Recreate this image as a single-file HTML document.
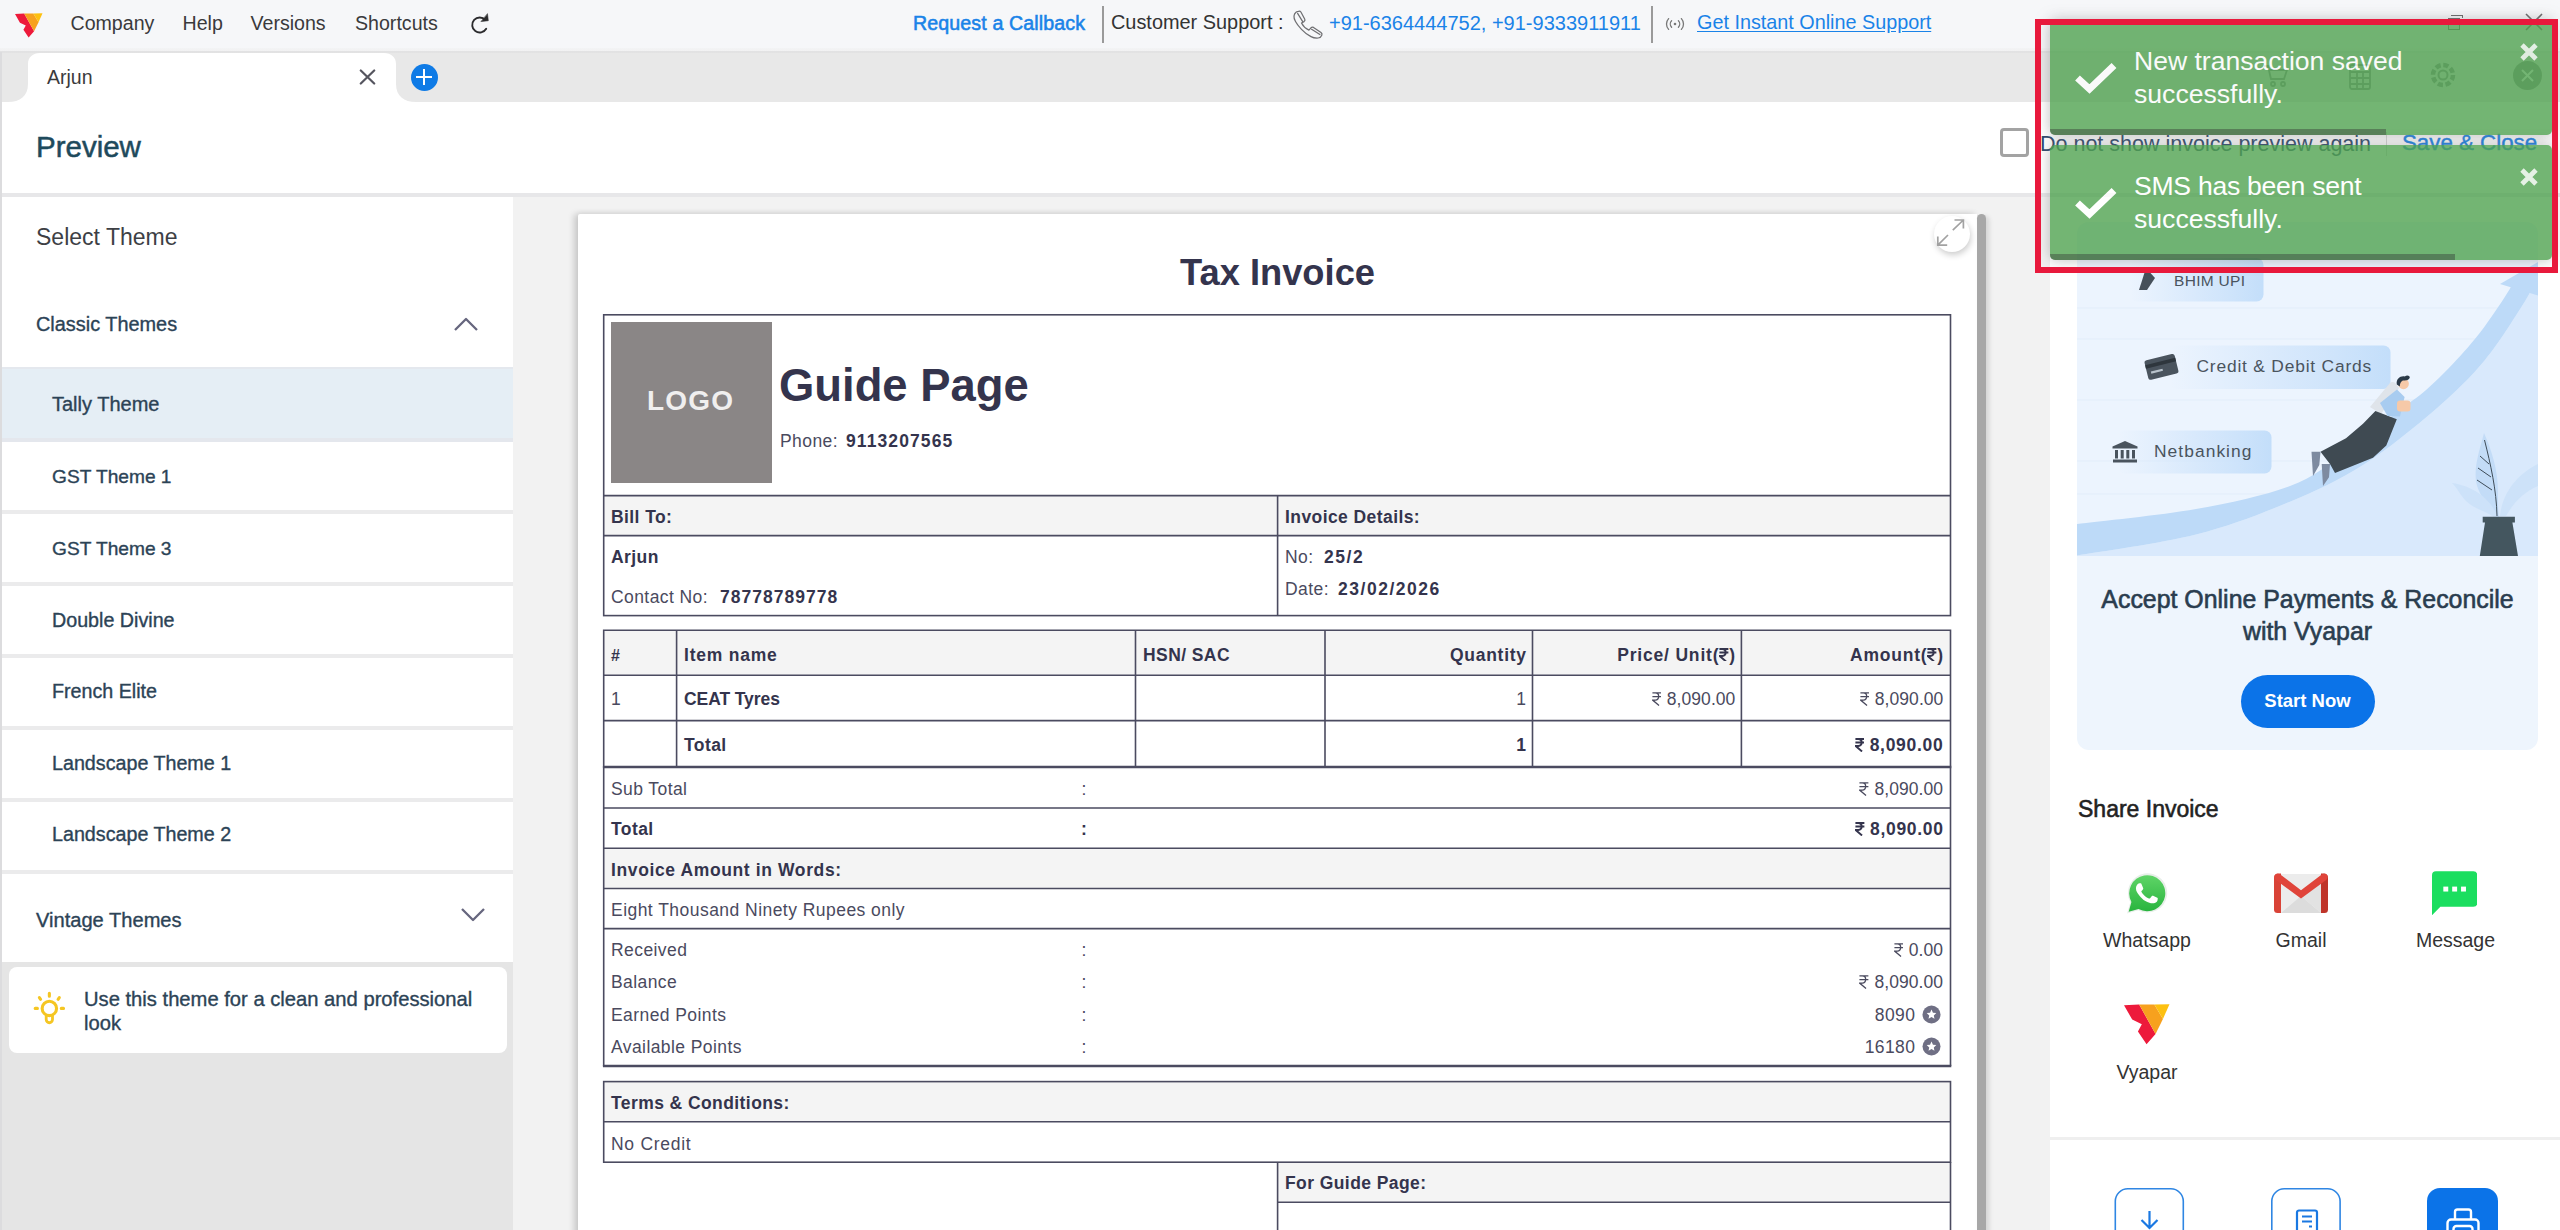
<!DOCTYPE html>
<html>
<head>
<meta charset="utf-8">
<title>Preview</title>
<style>
*{box-sizing:border-box;margin:0;padding:0}
html,body{width:2560px;height:1230px;overflow:hidden;background:#f2f2f2;font-family:"Liberation Sans",sans-serif;}
.abs{position:absolute}
.t{position:absolute;white-space:nowrap;line-height:1}
#stage{position:relative;width:2560px;height:1230px;overflow:hidden;background:#f2f2f2}

/* top bar */
#topbar{left:0;top:0;width:2560px;height:51px;background:#f6f7f9}
#topshadow{left:0;top:48px;width:2560px;height:5px;background:linear-gradient(#f3f4f5 0,#f1f1f2 56%,#e2e2e3 64%,#e3e3e3 100%)}
.menu{font-size:19.6px;color:#3a3a3c;top:14px}
.blue{color:#1a83e8}
/* tab bar */
#tabbar{left:0;top:53px;width:2560px;height:49.4px;background:#e8e8e8}
#leftedge{left:0;top:52px;width:2px;height:1178px;background:#dcdcde}
/* header */
#header{left:2px;top:102px;width:2558px;height:91px;background:#fff}
#hline{left:2px;top:193px;width:2558px;height:4px;background:#e7e7e9}
/* left panel */
#lp{left:2px;top:197px;width:511px;height:765px;background:#fff}
#lpbot{left:2px;top:962px;width:511px;height:268px;background:#e5e5e5}
.sep{left:2px;width:511px;height:4px;background:#ebebec}
.li{font-size:19.5px;color:#2c4356;left:52px}
/* invoice */
#paper{left:578px;top:214px;width:1399px;height:1030px;background:#fff;box-shadow:-4px 0 6px rgba(0,0,0,.17),0 -3px 5px rgba(0,0,0,.025);border-radius:2px 0 0 0}
.bx{position:absolute;border:1.5px solid #454558}
.ln{position:absolute;background:#454558}
.iv{color:#4a4a5e}
.iv.b{color:#34344d}
.b{font-weight:bold}
.hd{background:#f4f4f4}
/* right panel */
#rp{left:2050px;top:197px;width:510px;height:1033px;background:#fff}
.sl{font-size:19.5px;color:#333;transform:translateX(-50%)}
.toast{background:#51a351;opacity:.8;border-radius:5px;overflow:hidden;box-shadow:0 0 14px rgba(120,120,120,.6)}
</style>
</head>
<body>
<div id="stage">

<!-- ============ TOP BAR ============ -->
<div class="abs" id="topbar"></div>
<div class="abs" id="topshadow"></div>
<svg class="abs" style="left:15px;top:12.5px" width="27.5" height="25" viewBox="218 760 222 196"><polygon fill="#ed1a3b" points="218,765 292,762 372,905 328,955 286,893 305,858 258,835"/><polygon fill="#f7a11e" points="292,762 366,762 408,832 372,905"/><polygon fill="#fdc010" points="366,762 440,760 408,832"/></svg>
<div class="t menu" style="left:70.5px">Company</div>
<div class="t menu" style="left:182.5px">Help</div>
<div class="t menu" style="left:250.5px">Versions</div>
<div class="t menu" style="left:355px">Shortcuts</div>
<svg class="abs" style="left:468px;top:11px" width="24" height="26" viewBox="468 11 24 26" fill="none" stroke="#2b2b2d" stroke-width="1.9" stroke-linecap="round"><path d="M486.2 28.8A7.5 7.5 0 1 1 485.3 20"/><path d="M487.5 14L488.3 20.7L481.3 21.5z" fill="#2b2b2d" stroke-width=".6" stroke-linejoin="round"/></svg>
<div class="t blue" id="rcb" style="left:913px;top:13.5px;font-size:19.6px;-webkit-text-stroke:0.55px #1a83e8;letter-spacing:.12px">Request a Callback</div>
<div class="abs" style="left:1102px;top:6px;width:2px;height:37px;background:#9a9a9a"></div>
<div class="t" id="cs" style="left:1111px;top:13px;font-size:19.9px;color:#333">Customer Support :</div>
<svg class="abs" style="left:1292px;top:9px" width="32" height="31" viewBox="1292 9 32 31" fill="none" stroke="#6f6f72" stroke-width="1.25" stroke-linejoin="round" stroke-linecap="round"><path d="M1298.4 11.3C1299.5 11 1300.3 11.2 1300.9 12L1304.8 19.3C1305.2 20.3 1304.8 21 1304 21.6L1301.5 23C1303 26 1305.5 28.5 1308.9 30.1L1311 27.8C1311.8 27 1312.6 26.9 1313.5 27.4L1321 32.5C1322 33.3 1322.2 34.3 1321.8 35.2C1321 37 1319.8 37.9 1318.2 38C1315.5 38.2 1313 37.7 1311 36.6C1307 34.5 1304 32 1301.5 29.3C1298.8 26.5 1296.8 24 1295.5 21.5C1294.3 19.5 1293.8 17.8 1294 16C1294.2 14.3 1295 13 1296 12.2C1296.8 11.7 1297.6 11.4 1298.4 11.3Z"/><path d="M1297.6 13.4L1302.7 21.7M1311.6 29.3L1319.9 34.5"/></svg>
<div class="t blue" id="ph" style="left:1329px;top:13px;font-size:20px">+91-6364444752, +91-9333911911</div>
<div class="abs" style="left:1650.5px;top:6px;width:2px;height:37px;background:#9a9a9a"></div>
<svg class="abs" style="left:1664px;top:15px" width="22" height="18" viewBox="0 0 22 18" fill="none" stroke="#777" stroke-width="1.3" stroke-linecap="round"><circle cx="11" cy="9" r="1.3" fill="#777" stroke="none"/><path d="M7.6 5.8a4.6 4.6 0 0 0 0 6.4M14.4 5.8a4.6 4.6 0 0 1 0 6.4M4.6 3.6a8 8 0 0 0 0 10.8M17.4 3.6a8 8 0 0 1 0 10.8"/></svg>
<div class="t blue" id="gis" style="left:1697px;top:13px;font-size:19.8px;text-decoration:underline;text-underline-offset:2px">Get Instant Online Support</div>
<!-- window controls -->
<div class="abs" style="left:2448px;top:18px;width:12px;height:12px;border:1.5px solid #6a6a6a"></div>
<div class="abs" style="left:2451px;top:15px;width:12px;height:3px;border-top:1.5px solid #6a6a6a;border-right:1.5px solid #6a6a6a"></div>
<svg class="abs" style="left:2524px;top:12px" width="20" height="20" viewBox="0 0 20 20" stroke="#6a6a6a" stroke-width="1.6"><path d="M2 2L18 18M18 2L2 18"/></svg>


<!-- ============ TAB BAR ============ -->
<div class="abs" id="tabbar"></div>
<svg class="abs" style="left:8px;top:52px" width="410" height="50" viewBox="0 0 410 50"><path fill="#fff" d="M0 50 C12 50 20 44 20 32 L20 12 C20 5 25 1 32 1 L376 1 C383 1 388 5 388 12 L388 32 C388 44 396 50 408 50 Z"/></svg>
<div class="t" id="tabname" style="left:47px;top:67.7px;font-size:19.5px;color:#3a3a3c">Arjun</div>
<svg class="abs" style="left:359px;top:69px" width="17" height="16" viewBox="0 0 17 16" stroke="#55555f" stroke-width="2.2" stroke-linecap="round"><path d="M1.8 1.5L15.2 14.5M15.2 1.5L1.8 14.5"/></svg>
<div class="abs" style="left:410.5px;top:63.5px;width:27px;height:27px;border-radius:50%;background:#0f7be6"></div>
<div class="abs" style="left:416px;top:75.6px;width:16px;height:2.8px;background:#fff"></div>
<div class="abs" style="left:422.6px;top:69px;width:2.8px;height:16px;background:#fff"></div>
<!-- right icons (faint, under toast) -->
<svg class="abs" style="left:2262px;top:62px" width="28" height="28" viewBox="0 0 28 28" fill="none" stroke="#8a8a90" stroke-width="1.8"><path d="M2 4h4l3 13h13l3-9H8"/><circle cx="11" cy="22" r="2"/><circle cx="21" cy="22" r="2"/></svg>
<svg class="abs" style="left:2349px;top:64px" width="22" height="26" viewBox="0 0 22 26" fill="none" stroke="#8a8a90" stroke-width="1.8"><rect x="1" y="1" width="20" height="24" rx="2"/><path d="M1 8h20M8 8v17M14 8v17M1 14h20M1 20h20"/></svg>
<svg class="abs" style="left:2429px;top:61px" width="28" height="28" viewBox="0 0 28 28" fill="none" stroke="#8a8a90" stroke-width="2"><circle cx="14" cy="14" r="4.5"/><circle cx="14" cy="14" r="10" stroke-dasharray="5.2 2.65" stroke-width="4.5"/></svg>
<div class="abs" style="left:2513px;top:61px;width:29px;height:29px;border-radius:50%;background:#8c8c8e"></div>
<svg class="abs" style="left:2520px;top:68px" width="15" height="15" viewBox="0 0 15 15" stroke="#fff" stroke-width="2"><path d="M2 2L13 13M13 2L2 13"/></svg>


<!-- ============ HEADER ============ -->
<div class="abs" id="header"></div>
<div class="abs" id="hline"></div>
<div class="t" id="pv" style="left:36px;top:132px;font-size:29.5px;color:#1e4a5c;-webkit-text-stroke:0.5px #1e4a5c">Preview</div>
<div class="abs" style="left:2000px;top:128px;width:29px;height:29px;border:3px solid #a3a3a3;border-radius:4px;background:#fff"></div>
<div class="t" id="dns" style="left:2040px;top:133.5px;font-size:21.5px;color:#2f4a6d">Do not show invoice preview again</div>
<div class="abs" style="left:2386px;top:132px;width:1px;height:24px;background:#d8d8d8"></div>
<div class="t" id="svc" style="left:2402px;top:131.5px;font-size:22.3px;color:#1a83e8;-webkit-text-stroke:0.4px #1a83e8">Save &amp; Close</div>


<!-- ============ LEFT PANEL ============ -->
<div class="abs" id="lp"></div>
<div class="abs" id="lpbot"></div>
<div class="t" id="selth" style="left:36px;top:226px;font-size:23px;color:#3d3f45">Select Theme</div>
<div class="t" id="clth" style="left:36px;top:315px;font-size:19.9px;color:#2c4356;-webkit-text-stroke:0.35px #2c4356">Classic Themes</div>
<svg class="abs" style="left:452.3px;top:315.2px" width="28" height="18" viewBox="0 0 28 18" fill="none" stroke="#66667e" stroke-width="2.3" stroke-linecap="butt" stroke-linejoin="round"><path d="M3 15L14 4L25 15"/></svg>
<div class="abs" style="left:2px;top:366.5px;width:511px;height:75.5px;background:#e5eef5;border-top:2.5px solid #e4e8ee;border-bottom:4px solid #e4e7ed"></div>
<div class="t li" id="tally" style="top:394px;-webkit-text-stroke:0.35px #2c4356;font-size:20px">Tally Theme</div>
<div class="t li" id="li0" style="top:467px;-webkit-text-stroke:0.35px #2c4356;font-size:19.15px">GST Theme 1</div>
<div class="abs sep" style="top:510px"></div>
<div class="t li" id="li1" style="top:539px;-webkit-text-stroke:0.35px #2c4356;font-size:19.15px">GST Theme 3</div>
<div class="abs sep" style="top:582px"></div>
<div class="t li" id="li2" style="top:611px;-webkit-text-stroke:0.35px #2c4356;font-size:19.7px">Double Divine</div>
<div class="abs sep" style="top:654px"></div>
<div class="t li" id="li3" style="top:682px;-webkit-text-stroke:0.35px #2c4356;font-size:19.7px">French Elite</div>
<div class="abs sep" style="top:726px"></div>
<div class="t li" id="li4" style="top:754px;-webkit-text-stroke:0.35px #2c4356;font-size:19.7px">Landscape Theme 1</div>
<div class="abs sep" style="top:798px"></div>
<div class="t li" id="li5" style="top:825px;-webkit-text-stroke:0.35px #2c4356;font-size:19.7px">Landscape Theme 2</div>
<div class="abs sep" style="top:870px"></div>
<div class="t" id="vint" style="left:36px;top:910px;font-size:20.1px;color:#2c4356;-webkit-text-stroke:0.35px #2c4356">Vintage Themes</div>
<svg class="abs" style="left:459px;top:905px" width="28" height="18" viewBox="0 0 28 18" fill="none" stroke="#66667e" stroke-width="2.3" stroke-linecap="butt" stroke-linejoin="round"><path d="M3 4L14 15L25 4"/></svg>
<div class="abs" style="left:9px;top:967px;width:498px;height:86px;background:#fff;border-radius:8px"></div>
<svg class="abs" style="left:30px;top:988px" width="40" height="40" viewBox="30 988 40 40" fill="none" stroke="#f5c623" stroke-width="3.1" stroke-linecap="round"><circle cx="49.35" cy="1008.4" r="7.2"/><path d="M46.2 1015.5V1019.6A3.15 3.15 0 0 0 52.5 1019.6V1015.5" stroke-width="2.8"/><path d="M49.35 993.3V996.3M39.4 997.6L40.6 999.3M59.3 997.6L58.1 999.3M35.2 1008.4H37.4M61.3 1008.4H63.5"/></svg>
<div class="t" id="tip1" style="left:84px;top:988.5px;font-size:20.2px;color:#2c4356;-webkit-text-stroke:0.35px #2c4356">Use this theme for a clean and professional</div>
<div class="t" id="tip2" style="left:84px;top:1012.5px;font-size:20.2px;color:#2c4356;-webkit-text-stroke:0.35px #2c4356">look</div>


<!-- ============ INVOICE ============ -->
<div class="abs" id="paper"></div>
<svg class="abs" style="left:0;top:0" width="2560" height="1230" viewBox="0 0 2560 1230" fill="none" stroke="#4b4b60" stroke-width="1.6">
<rect x="604" y="496" width="1346.5" height="40" fill="#f4f4f4" stroke="none"/>
<rect x="604" y="630.5" width="1346.5" height="45" fill="#f4f4f4" stroke="none"/>
<rect x="604" y="848.5" width="1346.5" height="40" fill="#f4f4f4" stroke="none"/>
<rect x="604" y="1082" width="1346.5" height="40" fill="#f4f4f4" stroke="none"/>
<rect x="1278" y="1162.5" width="672.5" height="40" fill="#f4f4f4" stroke="none"/>
<rect x="603.7" y="314.8" width="1346.8" height="300.8"/>
<path d="M603.7 495.6H1950.5M603.7 535.6H1950.5M1277.6 495.6V615.6"/>
<path d="M603.7 1066V630.3H1950.5V1066"/>
<path d="M603.7 675.2H1950.5M603.7 720.6H1950.5M676.6 630.3V767M1135.5 630.3V767M1325 630.3V767M1532.5 630.3V767M1741.4 630.3V767"/>
<path d="M603.7 808H1950.5M603.7 848.2H1950.5M603.7 888.5H1950.5M603.7 928.6H1950.5"/>
<path d="M602.9 767H1951.3M602.9 1066H1951.3" stroke-width="2.6"/>
<rect x="603.7" y="1081.6" width="1346.8" height="80.6"/>
<path d="M603.7 1121.8H1950.5"/>
<path d="M1277.6 1162V1240M1950.5 1162V1240M1277.6 1202.2H1950.5"/>
</svg>
<div class="abs" style="left:611px;top:322px;width:161px;height:161px;background:#8a8686"></div>
<div class="t b" id="logo" style="left:647px;top:387px;font-size:28px;color:#f0efef;letter-spacing:1.2px">LOGO</div>
<div class="t iv b" id="taxinv" style="top:254.70px;font-size:36.3px;left:1277.50px;transform:translateX(-50%);">Tax Invoice</div>
<div class="t iv b" id="gp" style="top:362.6px;font-size:45.4px;left:779.00px;">Guide Page</div>
<div class="t iv" id="phl" style="top:432.98px;font-size:17.50px;left:780.00px;letter-spacing:0.42px">Phone:</div>
<div class="t iv b" id="phn" style="top:432.98px;font-size:17.50px;left:846.00px;letter-spacing:1.10px">9113207565</div>
<div class="t iv b" id="billto" style="top:509.18px;font-size:17.50px;left:611.00px;letter-spacing:0.42px">Bill To:</div>
<div class="t iv b" id="invd" style="top:509.18px;font-size:17.50px;left:1285.00px;letter-spacing:0.42px">Invoice Details:</div>
<div class="t iv b" id="arj" style="top:549.18px;font-size:17.50px;left:611.00px;letter-spacing:0.42px">Arjun</div>
<div class="t iv" id="cnl" style="top:588.58px;font-size:17.50px;left:611.00px;letter-spacing:0.42px">Contact No:</div>
<div class="t iv b" id="cnn" style="top:588.58px;font-size:17.50px;left:720.00px;letter-spacing:1.02px">78778789778</div>
<div class="t iv" id="nol" style="top:549.18px;font-size:17.50px;left:1285.00px;letter-spacing:0.42px">No:</div>
<div class="t iv b" id="nov" style="top:549.18px;font-size:17.50px;left:1324.00px;letter-spacing:1.57px">25/2</div>
<div class="t iv" id="dtl" style="top:581.38px;font-size:17.50px;left:1285.00px;letter-spacing:0.42px">Date:</div>
<div class="t iv b" id="dtv" style="top:581.38px;font-size:17.50px;left:1338.00px;letter-spacing:1.52px">23/02/2026</div>
<div class="t iv b" style="top:648.06px;font-size:16.00px;left:611.00px;">#</div>
<div class="t iv b" id="ith" style="top:646.78px;font-size:17.50px;left:684.00px;letter-spacing:0.77px">Item name</div>
<div class="t iv b" id="hsn" style="top:646.78px;font-size:17.50px;left:1143.00px;letter-spacing:0.42px">HSN/ SAC</div>
<div class="t iv b" id="qty" style="top:646.78px;font-size:17.50px;right:1033.28px;letter-spacing:0.72px">Quantity</div>
<div class="t iv b" id="pru" style="top:646.78px;font-size:17.50px;right:824.18px;letter-spacing:0.82px">Price/ Unit(<svg viewBox="0 0 10 14" style="width:.56em;height:.78em;vertical-align:-.04em" fill="none" stroke="currentColor" stroke-width="2"><path d="M.4 1H9.6M.4 4.7H9.6M.4 1H3.4C8 1 8 8.3 3.4 8.3H.6L7.2 13.8"/></svg>)</div>
<div class="t iv b" id="amt" style="top:646.78px;font-size:17.50px;right:616.23px;letter-spacing:0.77px">Amount(<svg viewBox="0 0 10 14" style="width:.56em;height:.78em;vertical-align:-.04em" fill="none" stroke="currentColor" stroke-width="2"><path d="M.4 1H9.6M.4 4.7H9.6M.4 1H3.4C8 1 8 8.3 3.4 8.3H.6L7.2 13.8"/></svg>)</div>
<div class="t iv" style="top:690.98px;font-size:17.50px;left:611.00px;letter-spacing:0.42px">1</div>
<div class="t iv b" id="ceat" style="top:690.98px;font-size:17.50px;left:684.00px;letter-spacing:-0.08px">CEAT Tyres</div>
<div class="t iv" style="top:690.98px;font-size:17.50px;right:1033.58px;letter-spacing:0.42px">1</div>
<div class="t iv" id="p1" style="top:690.98px;font-size:17.50px;right:824.58px;letter-spacing:.07px"><svg class="rs" viewBox="0 0 10 14" style="width:.56em;height:.78em;vertical-align:-.04em;margin-right:.3em" fill="none" stroke="currentColor" stroke-width="1.3"><path d="M.4 1H9.6M.4 4.7H9.6M.4 1H3.4C8 1 8 8.3 3.4 8.3H.6L7.2 13.8"/></svg>8,090.00</div>
<div class="t iv" id="a1" style="top:690.98px;font-size:17.50px;right:616.58px;letter-spacing:.07px"><svg class="rs" viewBox="0 0 10 14" style="width:.56em;height:.78em;vertical-align:-.04em;margin-right:.3em" fill="none" stroke="currentColor" stroke-width="1.3"><path d="M.4 1H9.6M.4 4.7H9.6M.4 1H3.4C8 1 8 8.3 3.4 8.3H.6L7.2 13.8"/></svg>8,090.00</div>
<div class="t iv b" style="top:737.18px;font-size:17.50px;left:684.00px;letter-spacing:0.42px">Total</div>
<div class="t iv b" style="top:737.18px;font-size:17.50px;right:1033.58px;letter-spacing:0.42px">1</div>
<div class="t iv b" id="a2" style="top:737.18px;font-size:17.50px;right:616.58px;letter-spacing:.7px"><svg class="rs" viewBox="0 0 10 14" style="width:.56em;height:.78em;vertical-align:-.04em;margin-right:.3em" fill="none" stroke="currentColor" stroke-width="2"><path d="M.4 1H9.6M.4 4.7H9.6M.4 1H3.4C8 1 8 8.3 3.4 8.3H.6L7.2 13.8"/></svg>8,090.00</div>
<div class="t iv" id="subt" style="top:781.18px;font-size:17.50px;left:611.00px;letter-spacing:0.42px">Sub Total</div>
<div class="t iv" style="top:781.18px;font-size:17.50px;left:1081.50px;letter-spacing:0.42px">:</div>
<div class="t iv" style="top:781.18px;font-size:17.50px;right:616.93px;letter-spacing:0.07px"><svg class="rs" viewBox="0 0 10 14" style="width:.56em;height:.78em;vertical-align:-.04em;margin-right:.3em" fill="none" stroke="currentColor" stroke-width="1.3"><path d="M.4 1H9.6M.4 4.7H9.6M.4 1H3.4C8 1 8 8.3 3.4 8.3H.6L7.2 13.8"/></svg>8,090.00</div>
<div class="t iv b" style="top:821.18px;font-size:17.50px;left:611.00px;letter-spacing:0.42px">Total</div>
<div class="t iv b" style="top:821.18px;font-size:17.50px;left:1081.00px;letter-spacing:0.42px">:</div>
<div class="t iv b" style="top:821.18px;font-size:17.50px;right:616.30px;letter-spacing:0.70px"><svg class="rs" viewBox="0 0 10 14" style="width:.56em;height:.78em;vertical-align:-.04em;margin-right:.3em" fill="none" stroke="currentColor" stroke-width="2"><path d="M.4 1H9.6M.4 4.7H9.6M.4 1H3.4C8 1 8 8.3 3.4 8.3H.6L7.2 13.8"/></svg>8,090.00</div>
<div class="t iv b" id="iaw" style="top:861.58px;font-size:17.50px;left:611.00px;letter-spacing:0.62px">Invoice Amount in Words:</div>
<div class="t iv" id="eight" style="top:901.78px;font-size:17.50px;left:611.00px;letter-spacing:0.46px">Eight Thousand Ninety Rupees only</div>
<div class="t iv" id="recv" style="top:941.88px;font-size:17.50px;left:611.00px;letter-spacing:0.42px">Received</div>
<div class="t iv" style="top:941.88px;font-size:17.50px;left:1081.50px;letter-spacing:0.42px">:</div>
<div class="t iv" style="top:941.88px;font-size:17.50px;right:616.93px;letter-spacing:0.07px"><svg class="rs" viewBox="0 0 10 14" style="width:.56em;height:.78em;vertical-align:-.04em;margin-right:.3em" fill="none" stroke="currentColor" stroke-width="1.3"><path d="M.4 1H9.6M.4 4.7H9.6M.4 1H3.4C8 1 8 8.3 3.4 8.3H.6L7.2 13.8"/></svg>0.00</div>
<div class="t iv" style="top:974.18px;font-size:17.50px;left:611.00px;letter-spacing:0.42px">Balance</div>
<div class="t iv" style="top:974.18px;font-size:17.50px;left:1081.50px;letter-spacing:0.42px">:</div>
<div class="t iv" style="top:974.18px;font-size:17.50px;right:616.93px;letter-spacing:0.07px"><svg class="rs" viewBox="0 0 10 14" style="width:.56em;height:.78em;vertical-align:-.04em;margin-right:.3em" fill="none" stroke="currentColor" stroke-width="1.3"><path d="M.4 1H9.6M.4 4.7H9.6M.4 1H3.4C8 1 8 8.3 3.4 8.3H.6L7.2 13.8"/></svg>8,090.00</div>
<div class="t iv" id="earn" style="top:1006.88px;font-size:17.50px;left:611.00px;letter-spacing:0.42px">Earned Points</div>
<div class="t iv" style="top:1006.88px;font-size:17.50px;left:1081.50px;letter-spacing:0.42px">:</div>
<div class="t iv" style="top:1006.88px;font-size:17.50px;right:644.58px;letter-spacing:0.42px">8090</div>
<div class="t iv" id="avail" style="top:1038.68px;font-size:17.50px;left:611.00px;letter-spacing:0.42px">Available Points</div>
<div class="t iv" style="top:1038.68px;font-size:17.50px;left:1081.50px;letter-spacing:0.42px">:</div>
<div class="t iv" style="top:1038.68px;font-size:17.50px;right:644.58px;letter-spacing:0.42px">16180</div>
<svg class="abs" style="left:1922px;top:1005px" width="19" height="19" viewBox="0 0 19 19"><circle cx="9.5" cy="9.5" r="9" fill="#6f6f84"/><path fill="#fff" d="M9.5 4.6l1.45 3.1 3.35.4-2.5 2.3.65 3.3-2.95-1.65L6.55 13.7l.65-3.3-2.5-2.3 3.35-.4z"/></svg>
<svg class="abs" style="left:1922px;top:1037px" width="19" height="19" viewBox="0 0 19 19"><circle cx="9.5" cy="9.5" r="9" fill="#6f6f84"/><path fill="#fff" d="M9.5 4.6l1.45 3.1 3.35.4-2.5 2.3.65 3.3-2.95-1.65L6.55 13.7l.65-3.3-2.5-2.3 3.35-.4z"/></svg>
<div class="t iv b" id="tnc" style="top:1094.78px;font-size:17.50px;left:611.00px;letter-spacing:0.42px">Terms &amp; Conditions:</div>
<div class="t iv" id="nocr" style="top:1135.58px;font-size:17.50px;left:611.00px;letter-spacing:0.72px">No Credit</div>
<div class="t iv b" id="fgp" style="top:1175.18px;font-size:17.50px;left:1285.00px;letter-spacing:0.42px">For Guide Page:</div>
<div class="abs" style="left:1934px;top:215.5px;width:36px;height:36px;border-radius:50%;background:#fff;box-shadow:1px 3px 6px rgba(0,0,0,.2)"></div>
<svg class="abs" style="left:1930px;top:212px" width="40" height="40" viewBox="1930 212 40 40" fill="none" stroke="#a2a2a2" stroke-width="1.7"><path d="M1952.8 230.2L1963.4 220M1954.5 220H1963.4V228.6M1948 235L1937.8 245.1M1937.8 236.6V245.1H1947.2"/></svg>
<div class="abs" style="left:1977px;top:214px;width:9px;height:1030px;background:#a7a7a7;border-radius:5px 5px 0 0;box-shadow:3px 2px 5px rgba(0,0,0,.13)"></div>


<!-- ============ RIGHT PANEL ============ -->
<div class="abs" id="rp"></div>
<div class="abs" style="left:2077px;top:222px;width:461px;height:528px;background:#eef5fd;border-radius:12px"></div>
<svg class="abs" style="left:2077px;top:222px" width="461" height="334" viewBox="2077 222 461 334">
<defs>
<linearGradient id="pg" x1="0" x2="1" y1="0" y2="0"><stop offset="0" stop-color="#cfe4fb" stop-opacity="0"/><stop offset=".55" stop-color="#cfe4fb" stop-opacity=".75"/><stop offset="1" stop-color="#c3defa"/></linearGradient>
<clipPath id="cc"><path d="M2077 234a12 12 0 0 1 12-12h437a12 12 0 0 1 12 12V556H2077z"/></clipPath>
</defs>
<g clip-path="url(#cc)">
<rect x="2077" y="222" width="461" height="334" fill="#ecf4fe"/>
<path d="M2077 308H2538M2077 339H2538M2077 400H2538M2077 461H2538M2077 494H2538" stroke="#e2edfa" stroke-width="1"/>
<path fill="#d9e9fc" d="M2077.0 555.5C2096.8 552.0 2160.5 543.5 2196.0 534.5C2231.5 525.5 2262.2 513.3 2290.0 501.7C2317.8 490.1 2338.7 480.4 2363.0 465.0C2387.3 449.6 2415.7 426.5 2436.0 409.0C2456.3 391.5 2470.7 377.1 2485.0 360.0C2499.3 342.9 2513.5 319.2 2521.7 306.6C2529.9 294.0 2530.9 290.4 2534.0 284.6C2537.1 278.8 2539.0 274.1 2540.0 272.0L2540 556L2077 556z"/>
<path fill="#bddaf8" d="M2077.0 524.0C2096.8 521.5 2160.5 515.3 2196.0 509.0C2231.5 502.7 2265.2 495.3 2290.0 486.0C2314.8 476.7 2327.2 465.3 2345.0 453.0C2362.8 440.7 2383.4 422.6 2397.0 412.0C2410.6 401.4 2416.0 398.9 2426.6 389.5C2437.2 380.1 2451.0 366.0 2460.7 355.4C2470.4 344.8 2476.9 337.0 2485.0 326.0C2493.1 315.0 2504.3 298.0 2509.5 289.5C2514.7 281.0 2514.9 277.4 2516.0 275.0L2540.0 272.0C2539.0 274.1 2537.1 278.8 2534.0 284.6C2530.9 290.4 2529.9 294.0 2521.7 306.6C2513.5 319.2 2499.3 342.9 2485.0 360.0C2470.7 377.1 2456.3 391.5 2436.0 409.0C2415.7 426.5 2387.3 449.6 2363.0 465.0C2338.7 480.4 2317.8 490.1 2290.0 501.7C2262.2 513.3 2231.5 525.5 2196.0 534.5C2160.5 543.5 2096.8 552.0 2077.0 555.5z"/>
<path fill="#bddaf8" d="M2500 284L2538 262L2540 296z"/>
<rect x="2130" y="258" width="133.5" height="43.5" rx="7" fill="url(#pg)"/>
<rect x="2170" y="345.5" width="220.5" height="43.5" rx="7" fill="url(#pg)"/>
<rect x="2118" y="430.5" width="153.5" height="43" rx="7" fill="url(#pg)"/>
<!-- bhim icon -->
<path fill="#46505a" d="M2146 268l9 10-8 12h-8z"/>
<!-- card icon -->
<g transform="rotate(-14 2161 367)"><rect x="2146" y="357" width="31" height="20" rx="2.5" fill="#4a545e"/><rect x="2146" y="361.5" width="31" height="3.5" fill="#2e363d"/><rect x="2150" y="369" width="12" height="2.2" fill="#b9c3cc"/></g>
<!-- bank icon -->
<g fill="#4a545e"><path d="M2125 441l12.5 5.5v2h-25v-2z"/><rect x="2115" y="450" width="3" height="8.5"/><rect x="2120.7" y="450" width="3" height="8.5"/><rect x="2126.3" y="450" width="3" height="8.5"/><rect x="2132" y="450" width="3" height="8.5"/><rect x="2113" y="459.5" width="24" height="3"/></g>
<!-- man -->
<g>
<path fill="#dfe4ea" d="M2370 407l20-24c2-2 5-1 6 1l3 4-18 26z"/>
<path fill="#3f4a52" d="M2375.400 411L2396.800 419.3L2386.300 445.6L2373 457.8L2335 473L2330 464L2320.500 451.7L2346 438.3L2363 423.7z"/>
<path fill="#a8ccf0" d="M2380 403L2397 389.5L2404.600 397L2400 416.5L2387.500 416z"/>
<rect x="2397" y="400.5" width="13.5" height="11" rx="3" fill="#f6c9a8"/>
<circle cx="2403.5" cy="383.8" r="5.4" fill="#f6c9a8"/>
<path fill="#2b3a48" d="M2396.800 384.500c-1-6 4-9 8-8 2-2 5-1 5 1-1 3-4 3-7 3-2 1-3 3-3 6z"/>
<path fill="#7d8aa0" d="M2311.500 451.700h9l-1.200 13.300-6.300 11zM2321.700 463.900h8.300l-1 13.400-6 8.6z"/>
</g>
<!-- plant -->
<g>
<path fill="#c3dcf7" d="M2484 433c8 18 14 38 14 58 0 12 0 20 1 26h-3c-6-10-18-22-20-36-2-16 4-32 8-48z"/>
<path fill="#cde2f9" d="M2500 516c2-20 14-40 38-52v22c-14 6-24 16-32 30z"/>
<path fill="#cde2f9" d="M2497 516c-4-14-22-30-45-33 6 6 8 12 14 18 8 8 20 10 28 16z"/>
<path d="M2484.500 440c6 24 12 50 12.500 76M2480 456l9 8M2478 468l13 9M2477 480l15 10" stroke="#3e4c58" stroke-width="1" fill="none"/>
<path fill="#44565f" d="M2482.700 516.800h32.200v5.600h-2.500l5.600 33.600h-38.200l5.200-33.600h-2.300z"/>
</g>
</g>
</svg>
<div class="t" id="bhim" style="left:2174px;top:272.5px;font-size:15.5px;color:#4a545e;letter-spacing:.3px">BHIM UPI</div>
<div class="t" id="cdc" style="left:2196.5px;top:358px;font-size:17.4px;color:#4a545e;letter-spacing:.8px">Credit &amp; Debit Cards</div>
<div class="t" id="netb" style="left:2154px;top:442.5px;font-size:17.4px;color:#4a545e;letter-spacing:1.05px">Netbanking</div>
<div class="t" id="acc1" style="left:2307.5px;top:586.8px;font-size:24.9px;color:#2a3d4f;transform:translateX(-50%);-webkit-text-stroke:0.6px #2a3d4f">Accept Online Payments &amp; Reconcile</div>
<div class="t" id="acc2" style="left:2307.5px;top:619px;font-size:24.9px;color:#2a3d4f;transform:translateX(-50%);-webkit-text-stroke:0.6px #2a3d4f">with Vyapar</div>
<div class="abs" style="left:2240.5px;top:674.5px;width:134px;height:53px;border-radius:27px;background:#0b73e8"></div>
<div class="t b" id="startnow" style="left:2307.5px;top:692.3px;font-size:18.5px;color:#fff;transform:translateX(-50%)">Start Now</div>
<div class="t" id="share" style="left:2078px;top:798px;font-size:23px;color:#222;-webkit-text-stroke:0.55px #222">Share Invoice</div>
<!-- whatsapp -->
<svg class="abs" style="left:2126px;top:871.5px" width="42.5" height="42.5" viewBox="0 0 40 40"><defs><linearGradient id="wg" x1="0" y1="0" x2="0" y2="1"><stop offset="0" stop-color="#5fd467"/><stop offset="1" stop-color="#28b43e"/></linearGradient></defs><path fill="#e8efe9" d="M1 39l3-10.5A18.5 18.5 0 1 1 11.5 36z"/><path fill="url(#wg)" d="M2.5 37.5l2.6-9.3A17 17 0 1 1 11.8 34.9z"/><path fill="#fff" d="M14.3 10.6c-.5-1-1-1-1.5-1h-1.2c-.5 0-1.2.2-1.8.9-.6.7-2.3 2.2-2.3 5.3s2.3 6.2 2.7 6.6c.3.4 4.5 7.1 11.1 9.6 5.5 2.1 6.6 1.7 7.8 1.6 1.2-.1 3.8-1.5 4.3-3 .5-1.5.5-2.8.4-3-.2-.3-.6-.400-1.2-.8l-4.4-2.1c-.6-.2-1-.3-1.5.3-.4.7-1.7 2.1-2.1 2.6-.4.4-.8.5-1.4.2-.7-.3-2.8-1-5.3-3.3-2-1.7-3.3-3.9-3.7-4.5-.4-.7 0-1 .3-1.4l1-1.1c.3-.4.4-.7.7-1.1.2-.4.1-.8 0-1.1z" transform="translate(3.5 3.2) scale(.78)"/></svg>
<!-- gmail -->
<svg class="abs" style="left:2274px;top:873px" width="54" height="41" viewBox="0 0 54 41"><rect x="3" y="1" width="48" height="39" rx="2" fill="#ececec"/><path fill="#dcdcdc" d="M7 40L27 23L47 40z"/><path fill="#e2e2e2" d="M47 8V40L27 23z"/><path fill="#d94337" d="M0 4.5C0 2 2 .5 4 .5H7V40H3.5A3.5 3.5 0 0 1 0 36.5z"/><path fill="#bf3429" d="M54 4.5C54 2 52 .5 50 .5H47V40H50.5A3.5 3.5 0 0 0 54 36.5z"/><path fill="#e0443a" d="M1 2C2.2 .4 4.8 .2 6.3 1.4L27 17.3 47.7 1.4C49.2 .2 51.8 .4 53 2 54.2 3.7 53.8 5.8 52.2 7L27 25.5 1.8 7C.2 5.8-.2 3.7 1 2z"/></svg>
<!-- message -->
<svg class="abs" style="left:2432px;top:870.5px" width="45.3" height="45" viewBox="0 0 46 45"><path fill="#1bde5f" d="M4 0H42A4 4 0 0 1 46 4V32A4 4 0 0 1 42 36H8.5L0 44.5V4A4 4 0 0 1 4 0z"/><rect x="11.5" y="15.5" width="5" height="5" fill="#fff"/><rect x="20.5" y="15.5" width="5" height="5" fill="#fff"/><rect x="29.5" y="15.5" width="5" height="5" fill="#fff"/></svg>
<div class="t sl" id="wa" style="left:2147px;top:930.5px">Whatsapp</div>
<div class="t sl" id="gm" style="left:2301px;top:930.5px">Gmail</div>
<div class="t sl" id="msg" style="left:2455.5px;top:930.5px">Message</div>
<svg class="abs" style="left:2124px;top:1004px" width="45.5" height="40.5" viewBox="218 760 222 196"><polygon fill="#ed1a3b" points="218,765 292,762 372,905 328,955 286,893 305,858 258,835"/><polygon fill="#f7a11e" points="292,762 366,762 408,832 372,905"/><polygon fill="#fdc010" points="366,762 440,760 408,832"/></svg>
<div class="t sl" id="vy" style="left:2147px;top:1062.5px">Vyapar</div>
<div class="abs" style="left:2050px;top:1136.5px;width:510px;height:3px;background:#efefef"></div>
<svg class="abs" style="left:2110px;top:1184px" width="240" height="50" viewBox="2110 1184 240 50" fill="#fff" stroke="#2f86e3" stroke-width="1.6"><rect x="2115.3" y="1188.8" width="68" height="70" rx="12.5"/><rect x="2271.8" y="1188.8" width="68.3" height="70" rx="12.5"/></svg>

<div class="abs" style="left:2427px;top:1188px;width:71px;height:70px;border-radius:13px;background:#0b73e8"></div>
<svg class="abs" style="left:2136px;top:1210px" width="27" height="22" viewBox="0 0 27 22" fill="none" stroke="#1a78e2" stroke-width="2.2"><path d="M13.5 1V17M5.5 10L13.5 18L21.5 10"/></svg>
<svg class="abs" style="left:2295px;top:1208.5px" width="24" height="24" viewBox="0 0 24 24" fill="none" stroke="#1a78e2" stroke-width="2.2"><path d="M2 24V3.5A2 2 0 0 1 4 1.5H20A2 2 0 0 1 22 3.5V24"/><path d="M7 7.5H17M7 12.5H17M14 17.5H17"/></svg>
<svg class="abs" style="left:2446px;top:1207.5px" width="34" height="24" viewBox="0 0 34 24" fill="none" stroke="#fff" stroke-width="2.4"><path d="M9 11.5V4A2.5 2.5 0 0 1 11.5 1.5H22.5A2.5 2.5 0 0 1 25 4V11.5"/><path d="M1.5 24V15A3.5 3.5 0 0 1 5 11.5H29A3.5 3.5 0 0 1 32.5 15V24"/><path d="M7.5 24V21A3 3 0 0 1 10.5 18H23.5A3 3 0 0 1 26.5 21V24"/></svg>


<div class="abs" id="leftedge"></div>

<!-- ============ TOASTS ============ -->
<div class="abs toast" style="left:2050px;top:20px;width:502px;height:115px">
<svg class="abs" style="left:24px;top:41px" width="44" height="34" viewBox="0 0 44 34" fill="none" stroke="#fff" stroke-width="7"><path d="M3.5 17L15.5 28L40 4.5"/></svg>
<div class="t" style="left:84px;top:25px;font-size:26.600px;color:#fff;line-height:33px"><span style="font-size:26.55px">New transaction saved</span><br>successfully.</div>
<svg class="abs" style="left:470px;top:23px" width="18" height="18" viewBox="0 0 18 18" stroke="#fff" stroke-width="4.8" opacity=".82"><path d="M2 2L16 16M16 2L2 16"/></svg>
<div class="abs" style="left:0;bottom:0;width:336px;height:6.5px;background:#000;opacity:.4"></div>
</div>
<div class="abs toast" style="left:2050px;top:145px;width:502px;height:115px">
<svg class="abs" style="left:24px;top:41px" width="44" height="34" viewBox="0 0 44 34" fill="none" stroke="#fff" stroke-width="7"><path d="M3.5 17L15.5 28L40 4.5"/></svg>
<div class="t" style="left:84px;top:25px;font-size:26.600px;color:#fff;line-height:33px"><span style="letter-spacing:-.28px">SMS has been sent</span><br>successfully.</div>
<svg class="abs" style="left:470px;top:23px" width="18" height="18" viewBox="0 0 18 18" stroke="#fff" stroke-width="4.8" opacity=".82"><path d="M2 2L16 16M16 2L2 16"/></svg>
<div class="abs" style="left:0;bottom:0;width:405px;height:6.5px;background:#000;opacity:.4"></div>
</div>
<div class="abs" style="left:2035px;top:18.5px;width:523px;height:254.5px;border:6.5px solid #e8193c"></div>


</div>
</body>
</html>
